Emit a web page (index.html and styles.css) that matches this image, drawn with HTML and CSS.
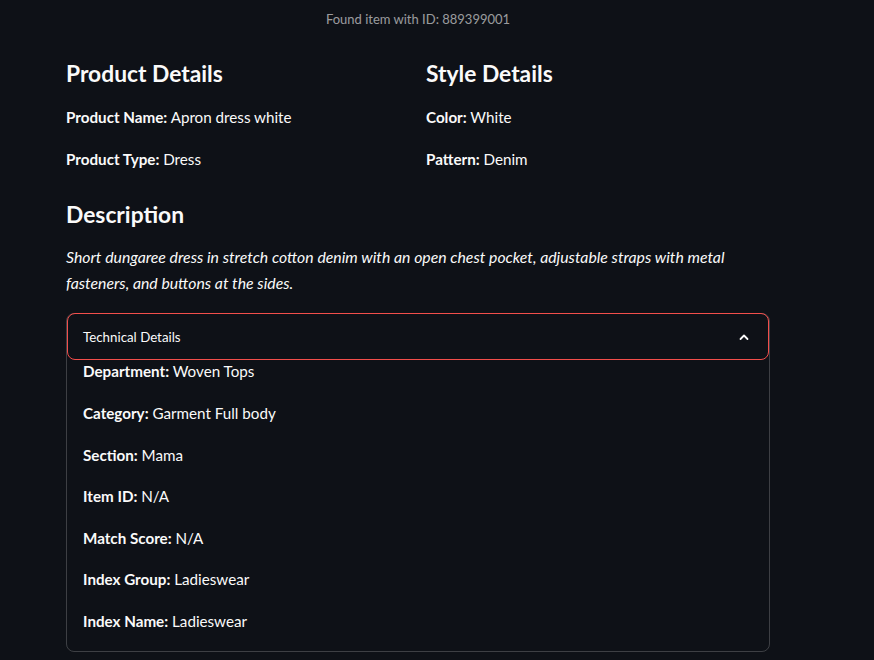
FILE: index.html
```html
<!DOCTYPE html>
<html>
<head>
<meta charset="utf-8">
<link rel="stylesheet" href="styles.css">
</head>
<body>
<main class="block">
  <p class="caption">Found item with ID: 889399001</p>
  <div class="cols">
    <div class="col">
      <h3>Product Details</h3>
      <p><strong>Product Name:</strong> Apron dress white</p>
      <p><strong>Product Type:</strong> Dress</p>
    </div>
    <div class="col">
      <h3>Style Details</h3>
      <p><strong>Color:</strong> White</p>
      <p><strong>Pattern:</strong> Denim</p>
    </div>
  </div>
  <h3 class="desc-title">Description</h3>
  <p class="desc"><em>Short dungaree dress in stretch cotton denim with an open chest pocket, adjustable straps with metal<br>fasteners, and buttons at the sides.</em></p>
  <div class="expander">
    <div class="summary">
      <span>Technical Details</span>
      <svg class="chev" width="16" height="16" viewBox="0 0 16 16"><path d="M4.5 10 L8 6.5 L11.5 10" fill="none" stroke="#fafafa" stroke-width="1.8" stroke-linecap="round" stroke-linejoin="round"/></svg>
    </div>
    <div class="content">
      <p><strong>Department:</strong> Woven Tops</p>
      <p><strong>Category:</strong> Garment Full body</p>
      <p><strong>Section:</strong> Mama</p>
      <p><strong>Item ID:</strong> N/A</p>
      <p><strong>Match Score:</strong> N/A</p>
      <p><strong>Index Group:</strong> Ladieswear</p>
      <p><strong>Index Name:</strong> Ladieswear</p>
    </div>
  </div>
</main>
</body>
</html>
```
FILE: styles.css
```css
html, body {
  margin: 0;
  padding: 0;
  background: #0e1117;
  color: #fafafa;
  font-family: "Lato", "Noto Sans", sans-serif;
}
.block {
  width: 704px;
  margin-left: 66px;
  display: flex;
  flex-direction: column;
}
p {
  margin: 0 0 16px 0;
  font-size: 15.2px;
  line-height: 25.6px;
}
strong { font-weight: 700; }
.caption {
  text-align: center;
  font-size: 13px;
  line-height: 20px;
  color: rgba(250, 250, 250, 0.6);
  margin: 9px 0 0 0;
}
.cols {
  display: flex;
  gap: 16px;
  margin-top: 30px;
}
.col {
  width: 344px;
}
h3 {
  font-size: 22.8px;
  font-weight: 700;
  line-height: 28px;
  margin: 0 0 18px 0;
}
.desc-title {
  margin-top: 12px;
  margin-bottom: 16px;
}
.desc {
  font-size: 15.8px;
  margin-bottom: 18px;
}
.expander {
  border: 1px solid rgba(250, 250, 250, 0.2);
  border-radius: 8px;
  height: 339px;
  box-sizing: border-box;
}
.summary {
  margin: -1px 0 0 0;
  height: 47px;
  box-sizing: border-box;
  border: 1px solid #f24e4b;
  border-radius: 8px;
  display: flex;
  align-items: center;
  justify-content: space-between;
  padding: 0 16px 0 15px;
  font-size: 13.3px;
}
.chev { display: block; }
.content {
  padding: 0 16px;
  margin-top: -1px;
}
.content p { margin-bottom: 16px; }
```
